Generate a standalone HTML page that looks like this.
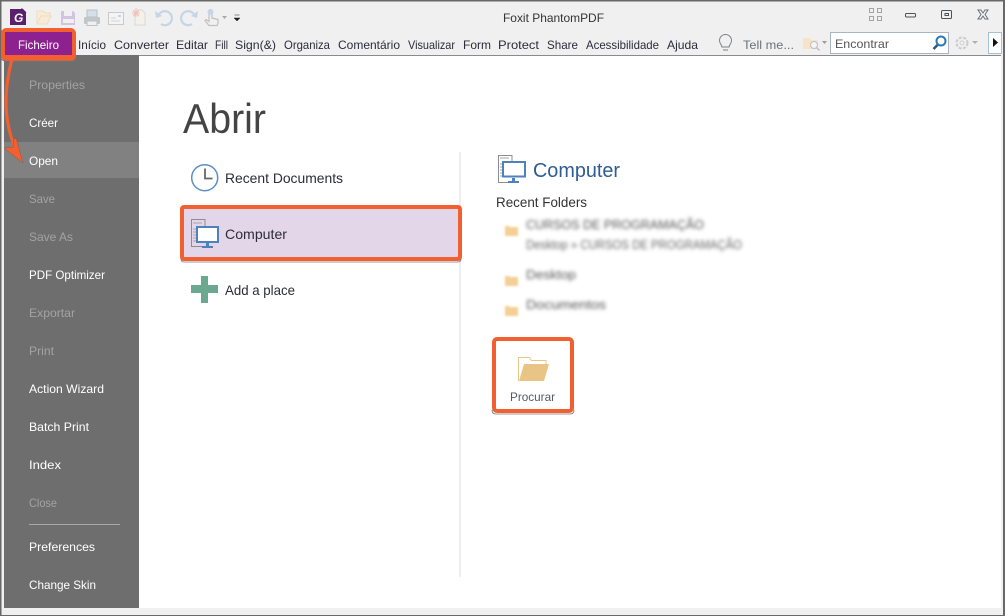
<!DOCTYPE html>
<html><head><meta charset="utf-8"><title>Foxit PhantomPDF</title>
<style>
html,body{margin:0;padding:0;background:#f0f0f0;width:1005px;height:616px;overflow:hidden}
svg{display:block}
text{font-family:"Liberation Sans",sans-serif;font-size:12px;fill:#2c2c3a}
.s{fill:#fff}.d{fill:#a3a3a3}
</style></head><body>
<svg width="1005" height="616" viewBox="0 0 1005 616" xmlns="http://www.w3.org/2000/svg">
<defs><filter id="b" x="-10%" y="-100%" width="120%" height="300%"><feGaussianBlur stdDeviation="1.9"/></filter>
<filter id="b2" x="-30%" y="-30%" width="160%" height="160%"><feGaussianBlur stdDeviation="1.1"/></filter></defs>
<!-- window -->
<rect x="0" y="0" width="1005" height="616" fill="#f0f0f0"/>
<rect x="0" y="0" width="1005" height="1.5" fill="#686868"/>
<rect x="0" y="0" width="1.5" height="616" fill="#686868"/>
<rect x="1003" y="0" width="2" height="616" fill="#686868"/>
<rect x="0" y="615" width="1005" height="1" fill="#686868"/>
<rect x="139" y="55" width="862" height="553" fill="#fff"/>
<rect x="139" y="55" width="862" height="1" fill="#8a8a8a"/>
<rect x="4" y="55" width="135" height="553" fill="#6e6e6e"/>
<rect x="4" y="142" width="135" height="36" fill="#818181"/>

<!-- toolbar icons -->
<rect x="10" y="9" width="16" height="16" fill="#5b1f6b"/>
<path d="M22 8h4v4z" fill="#f0f0f0"/><path d="M21.500 8.500l4.500 4.500" stroke="#5b1f6b" stroke-width="1.200"/>
<text x="14" y="22" lengthAdjust="spacingAndGlyphs" style="font-size:12px;font-weight:bold;font-style:italic;fill:#fff">G</text>
<path d="M37 24V11h6l2 2h5v3M37 24l4-8h10l-4 8z" fill="#f8ecd8" stroke="#eedcbc"/>
<path d="M61 11h12l2 2v12H61z" fill="#d3c3e0"/><rect x="64" y="11" width="8" height="5" fill="#f0f0f0"/><rect x="63" y="19" width="11" height="4" fill="#f0f0f0"/>
<rect x="84" y="17" width="16" height="7" rx="1" fill="#c2c7cb"/><rect x="87" y="10" width="10" height="7" fill="#d3dfe9" stroke="#bcc1c5"/><rect x="87" y="21" width="10" height="4.500" fill="#f0f0f0" stroke="#bcc1c5"/>
<rect x="108.500" y="12.500" width="15" height="12" fill="#f4f4f4" stroke="#c8cbce"/><rect x="118" y="15" width="3" height="2" fill="#c4d6e6"/><path d="M111 18h5M111 21h9" stroke="#d2d2d2"/>
<path d="M137 10h5l3 3v12h-10V14" fill="#f4f0ec" stroke="#ddd8d2"/>
<path d="M133 10l6 6M139 10l-6 6M136 8v9M132 13h8" stroke="#f0c0b2" stroke-width="1.100"/>
<path d="M158 17a7 7 0 1 1 3 7" fill="none" stroke="#c4d6e6" stroke-width="2.200"/><path d="M155 11l1 7 6-2z" fill="#c4d6e6"/>
<path d="M195 17a7 7 0 1 0-3 7" fill="none" stroke="#c4d6e6" stroke-width="2.200"/><path d="M198 11l-1 7-6-2z" fill="#c4d6e6"/>
<path d="M209 11a1.500 1.500 0 0 1 3 0v7l6 1.500v4l-1 2h-8l-4-5 1-1 3 2z" fill="#f0f0f0" stroke="#c0c0c0" stroke-width="1.200"/>
<circle cx="210.500" cy="12" r="3" fill="#c4d6e6"/>
<path d="M222 16h5l-2.500 3z" fill="#a8a8a8"/>
<path d="M234.500 15h5M234 18h6l-3 3z" fill="#222" stroke="#222" stroke-width=".5"/>

<!-- title & window buttons -->
<text x="503" y="22" textLength="101" lengthAdjust="spacingAndGlyphs" style="fill:#333">Foxit PhantomPDF</text>
<g fill="none" stroke="#a0a5a9"><rect x="869.500" y="8.500" width="4" height="4"/><rect x="877.500" y="8.500" width="4" height="4"/><rect x="869.500" y="16.500" width="4" height="4"/><rect x="877.500" y="16.500" width="4" height="4"/></g>
<g fill="none" stroke="#4c5257"><rect x="905.500" y="13.500" width="10" height="3.500" rx="1"/><rect x="941.500" y="10.500" width="10" height="8" rx="1"/><rect x="945" y="13.500" width="3.500" height="2"/></g>
<path d="M978 10h3l2 3 2-3h3l-3 4.500 3 4.500h-3l-2-3-2 3h-3l3-4.500z" fill="#f5f5f5" stroke="#6a7076"/>

<!-- menu -->
<g>
<text x="78" y="49" textLength="28" lengthAdjust="spacingAndGlyphs">Início</text>
<text x="114" y="49" textLength="55" lengthAdjust="spacingAndGlyphs">Converter</text>
<text x="176" y="49" textLength="32" lengthAdjust="spacingAndGlyphs">Editar</text>
<text x="215" y="49" textLength="13" lengthAdjust="spacingAndGlyphs">Fill</text>
<text x="235" y="49" textLength="41" lengthAdjust="spacingAndGlyphs">Sign(&amp;)</text>
<text x="284" y="49" textLength="46" lengthAdjust="spacingAndGlyphs">Organiza</text>
<text x="338" y="49" textLength="62" lengthAdjust="spacingAndGlyphs">Comentário</text>
<text x="408" y="49" textLength="47" lengthAdjust="spacingAndGlyphs">Visualizar</text>
<text x="463" y="49" textLength="28" lengthAdjust="spacingAndGlyphs">Form</text>
<text x="498" y="49" textLength="41" lengthAdjust="spacingAndGlyphs">Protect</text>
<text x="547" y="49" textLength="31" lengthAdjust="spacingAndGlyphs">Share</text>
<text x="586" y="49" textLength="73" lengthAdjust="spacingAndGlyphs">Acessibilidade</text>
<text x="667" y="49" textLength="31" lengthAdjust="spacingAndGlyphs">Ajuda</text>
</g>
<path d="M722 47c0-2-2.500-3-2.500-6.500a6 6 0 0 1 12 0c0 3.500-2.500 4.500-2.500 6.500zM723 50h5" fill="none" stroke="#7d8287"/>
<text x="743" y="49" textLength="51" lengthAdjust="spacingAndGlyphs" style="fill:#6d7278">Tell me...</text>
<path d="M803 38h6l2 2h7v9h-15z" fill="#f6e3c8"/><circle cx="814" cy="45" r="3.500" fill="#f4f4f4" stroke="#b8c0c6"/><path d="M816.500 47.500l3 3" stroke="#b8c0c6" stroke-width="1.400"/>
<path d="M822 41h5l-2.500 3z" fill="#9c9c9c"/>
<rect x="830.500" y="32.500" width="118" height="21" fill="#fff" stroke="#a9b5c0"/>
<text x="835" y="48" textLength="54" lengthAdjust="spacingAndGlyphs" style="fill:#555">Encontrar</text>
<circle cx="941" cy="41" r="4.500" fill="#fff" stroke="#2a7ab8" stroke-width="2"/><path d="M937.500 45l-4 4" stroke="#31577a" stroke-width="2.600"/>
<circle cx="962" cy="43" r="5.500" fill="none" stroke="#cccccc" stroke-width="2" stroke-dasharray="3 1.500"/><circle cx="962" cy="43" r="2" fill="none" stroke="#d0d0d0"/>
<path d="M972 41h6l-3 3z" fill="#b0b0b0"/>
<rect x="988.500" y="32.500" width="13" height="21" fill="#fdfdfd" stroke="#a9bfd2"/><path d="M993 38l5 4.500-5 4.500z" fill="#111"/>

<!-- Ficheiro -->
<rect x="2.500" y="29.500" width="72" height="30" rx="4" fill="#f25f30" stroke="#f25f30" stroke-width="3"/>
<path d="M1 57q0 4 5 4h66q4 0 4-4" fill="none" stroke="#777" stroke-width=".8"/>
<rect x="5" y="32" width="67" height="23" fill="#8e2190"/>
<text x="18" y="49" textLength="41" lengthAdjust="spacingAndGlyphs" class="s">Ficheiro</text>

<!-- sidebar -->
<text x="29" y="89" textLength="56" lengthAdjust="spacingAndGlyphs" class="d">Properties</text>
<text x="29" y="127" textLength="29" lengthAdjust="spacingAndGlyphs" class="s">Créer</text>
<text x="29" y="165" textLength="29" lengthAdjust="spacingAndGlyphs" class="s">Open</text>
<text x="29" y="203" textLength="26" lengthAdjust="spacingAndGlyphs" class="d">Save</text>
<text x="29" y="241" textLength="44" lengthAdjust="spacingAndGlyphs" class="d">Save As</text>
<text x="29" y="279" textLength="76" lengthAdjust="spacingAndGlyphs" class="s">PDF Optimizer</text>
<text x="29" y="317" textLength="46" lengthAdjust="spacingAndGlyphs" class="d">Exportar</text>
<text x="29" y="355" textLength="25" lengthAdjust="spacingAndGlyphs" class="d">Print</text>
<text x="29" y="393" textLength="75" lengthAdjust="spacingAndGlyphs" class="s">Action Wizard</text>
<text x="29" y="431" textLength="60" lengthAdjust="spacingAndGlyphs" class="s">Batch Print</text>
<text x="29" y="469" textLength="32" lengthAdjust="spacingAndGlyphs" class="s">Index</text>
<text x="29" y="507" textLength="28" lengthAdjust="spacingAndGlyphs" class="d">Close</text>
<rect x="29" y="524" width="91" height="1" fill="#a8a8a8"/>
<text x="29" y="551" textLength="66" lengthAdjust="spacingAndGlyphs" class="s">Preferences</text>
<text x="29" y="589" textLength="67" lengthAdjust="spacingAndGlyphs" class="s">Change Skin</text>

<!-- arrow -->
<path d="M12 59C4 90 3 118 15 148" fill="none" stroke="#f25f30" stroke-width="3.200"/>
<path d="M4 148l10-1-1-7 3-2 7 25z" fill="#f25f30" stroke="#8a5a48" stroke-width=".5"/>

<!-- Abrir -->
<text x="183" y="133" textLength="83" lengthAdjust="spacingAndGlyphs" style="font-size:42px;fill:#444">Abrir</text>

<!-- divider -->
<rect x="459" y="152" width="2" height="425" fill="#eeeeee"/>

<!-- left panel -->
<circle cx="204.700" cy="177.700" r="13" fill="#fff" stroke="#5b8fc7" stroke-width="1.500"/>
<path d="M205 168.500v10h7.500" fill="none" stroke="#666" stroke-width="1.800"/>
<text x="225" y="183" textLength="118" lengthAdjust="spacingAndGlyphs" style="font-size:14px">Recent Documents</text>

<rect x="182" y="207" width="278" height="52" rx="2" fill="#e3d6e9" stroke="#f25f30" stroke-width="4"/>
<path d="M181 259q0 3 3 3h274q3 0 3-3" fill="none" stroke="#777" stroke-width=".8"/>
<path d="M205 226v-6.500h-13.500v27H205" fill="none" stroke="#8d8d8d"/>
<path d="M193 223h9M193 229h3M193 232h3M193 235h3M193 238h3M193 241h3" stroke="#a5a5a5"/>
<rect x="197" y="227" width="21" height="15" fill="#fff" stroke="#4f81bd" stroke-width="2"/>
<path d="M206 243h3v3h4v2h-11v-2h4z" fill="#4f81bd"/>
<text x="225" y="239" textLength="62" lengthAdjust="spacingAndGlyphs" style="font-size:14px">Computer</text>

<path d="M201 276h7v9h10v8h-10v10h-7v-10h-10v-8h10z" fill="#6aa890"/>
<text x="225" y="295" textLength="70" lengthAdjust="spacingAndGlyphs" style="font-size:14px">Add a place</text>

<!-- right panel -->
<path d="M512 161v-5.500h-13.500v27H510" fill="none" stroke="#8d8d8d"/>
<path d="M500 158h9M500 164h2M500 167h2M500 170h2M500 173h2M500 176h2" stroke="#a5a5a5"/>
<rect x="503" y="162" width="22" height="14.500" fill="#fff" stroke="#4f81bd" stroke-width="2"/>
<path d="M512 178h3v3h4v2h-11v-2h4z" fill="#4f81bd"/>
<text x="533" y="177" textLength="87" lengthAdjust="spacingAndGlyphs" style="font-size:20px;fill:#2f5c96">Computer</text>
<text x="496" y="207" textLength="91" lengthAdjust="spacingAndGlyphs" style="font-size:14px;fill:#333">Recent Folders</text>

<!-- blurred recents -->
<g filter="url(#b)">
<text x="526" y="229" textLength="178" lengthAdjust="spacingAndGlyphs" style="font-size:13px;fill:#555">CURSOS DE PROGRAMAÇÃO</text>
<text x="526" y="249" textLength="216" lengthAdjust="spacingAndGlyphs" style="font-size:13px;fill:#666">Desktop » CURSOS DE PROGRAMAÇÃO</text>
<text x="526" y="279" textLength="50" lengthAdjust="spacingAndGlyphs" style="font-size:13px;fill:#555">Desktop</text>
<text x="526" y="309" textLength="80" lengthAdjust="spacingAndGlyphs" style="font-size:13px;fill:#555">Documentos</text>
</g>
<g filter="url(#b2)" fill="#f5cf94">
<path d="M505 226h4l1 1h8v9h-13z"/><path d="M505 276h4l1 1h8v9h-13z"/><path d="M505 306h4l1 1h8v9h-13z"/>
</g>

<!-- Procurar -->
<rect x="494" y="339" width="78" height="72" rx="3" fill="#fff" stroke="#f25f30" stroke-width="4"/>
<path d="M492 410q0 4 4 4h74q4 0 4-4" fill="none" stroke="#777" stroke-width=".8"/>
<path d="M518.500 381v-23.500h11l2 3h14.500v4" fill="#fff" stroke="#e8c585"/>
<path d="M519 381l5-17h25l-5 17z" fill="#e8c585"/>
<text x="510" y="401" textLength="45" lengthAdjust="spacingAndGlyphs" style="fill:#555a66">Procurar</text>
</svg>
</body></html>
